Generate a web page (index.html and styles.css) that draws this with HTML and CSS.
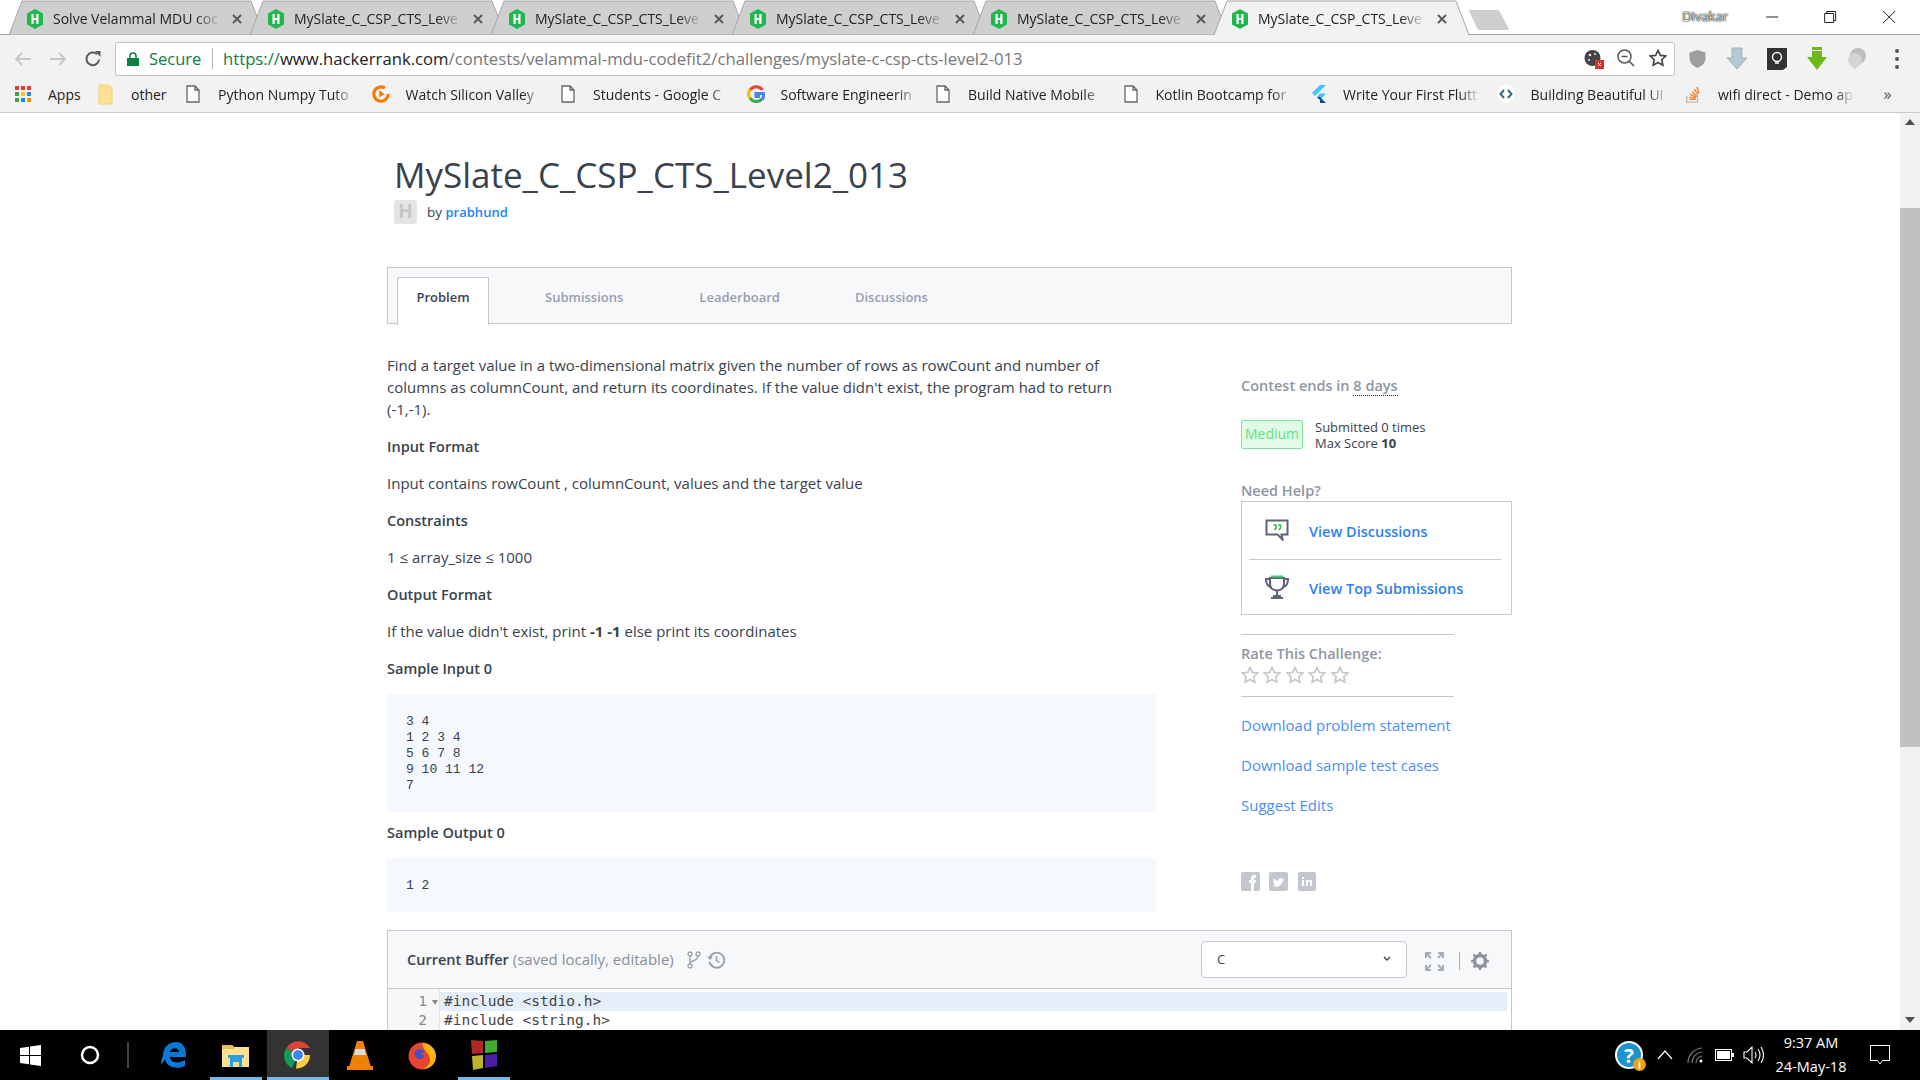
FILE: index.html
```html
<!DOCTYPE html>
<html lang="en">
<head>
<meta charset="utf-8">
<title>MySlate_C_CSP_CTS_Level2_013</title>
<link rel="stylesheet" href="styles.css">
</head>
<body>
<svg class="defs" width="0" height="0">
  <symbol id="hr" viewBox="0 0 18 20"><path d="M9 0l8 4.500v11L9 20l-8-4.500v-11z" fill="#1fb84f"/><path d="M5.500 5h2.200v4h2.600V5h2.200v10h-2.200v-4H7.700v4H5.500z" fill="#fff"/></symbol>
  <symbol id="doc" viewBox="0 0 15 18"><path d="M1.500 1h8l4 4v12h-12z M9.500 1v4h4" fill="#fff" stroke="#666" stroke-width="1.300"/></symbol>
  <symbol id="x" viewBox="0 0 10 10"><path d="M1 1l8 8M9 1l-8 8" stroke="#555" stroke-width="1.800"/></symbol>
  <symbol id="star" viewBox="0 0 20 20"><path d="M10 1.500l2.600 5.600 6 .7-4.400 4.100 1.200 6L10 15l-5.400 2.900 1.200-6L1.400 7.800l6-.7z" fill="#fff" stroke="#c9c7c6" stroke-width="1.800"/></symbol>
</svg>

<header class="browser">
  <div class="tabstrip">
    <div class="tab"><svg class="tab-shape" viewBox="0 0 255 35"><path d="M0 35L13 1h229l13 34z" fill="#cfcfcf" stroke="#a6a6a6"/></svg><svg class="fav"><use href="#hr"/></svg><span class="tab-title">Solve Velammal MDU coc</span><svg class="tab-x"><use href="#x"/></svg></div>
    <div class="tab"><svg class="tab-shape" viewBox="0 0 255 35"><path d="M0 35L13 1h229l13 34z" fill="#cfcfcf" stroke="#a6a6a6"/></svg><svg class="fav"><use href="#hr"/></svg><span class="tab-title">MySlate_C_CSP_CTS_Leve</span><svg class="tab-x"><use href="#x"/></svg></div>
    <div class="tab"><svg class="tab-shape" viewBox="0 0 255 35"><path d="M0 35L13 1h229l13 34z" fill="#cfcfcf" stroke="#a6a6a6"/></svg><svg class="fav"><use href="#hr"/></svg><span class="tab-title">MySlate_C_CSP_CTS_Leve</span><svg class="tab-x"><use href="#x"/></svg></div>
    <div class="tab"><svg class="tab-shape" viewBox="0 0 255 35"><path d="M0 35L13 1h229l13 34z" fill="#cfcfcf" stroke="#a6a6a6"/></svg><svg class="fav"><use href="#hr"/></svg><span class="tab-title">MySlate_C_CSP_CTS_Leve</span><svg class="tab-x"><use href="#x"/></svg></div>
    <div class="tab"><svg class="tab-shape" viewBox="0 0 255 35"><path d="M0 35L13 1h229l13 34z" fill="#cfcfcf" stroke="#a6a6a6"/></svg><svg class="fav"><use href="#hr"/></svg><span class="tab-title">MySlate_C_CSP_CTS_Leve</span><svg class="tab-x"><use href="#x"/></svg></div>
    <div class="tab"><svg class="tab-shape" viewBox="0 0 255 35"><path d="M0 35L13 1h229l13 34z" fill="#f2f2f2" stroke="#a6a6a6"/><path d="M1 35h253" stroke="#f2f2f2" stroke-width="2"/></svg><svg class="fav"><use href="#hr"/></svg><span class="tab-title">MySlate_C_CSP_CTS_Leve</span><svg class="tab-x"><use href="#x"/></svg></div>
    <svg class="newtab" width="42" height="22" viewBox="0 0 42 22"><path d="M1 1h28q2 0 3 2l9 17q0 1-2 1H12q-2 0-3-2L1 2z" fill="#cfcfcf"/></svg>
    <span class="user">Divakar</span>
    <div class="winctl">
      <svg width="12" height="12" viewBox="0 0 12 12"><path d="M0 6h12" stroke="#222"/></svg>
      <svg width="12" height="12" viewBox="0 0 12 12"><path d="M.5 2.500h9v9h-9zM2.500 2.500v-2h9v9h-2" fill="none" stroke="#222"/></svg>
      <svg width="12" height="12" viewBox="0 0 12 12"><path d="M0 0l12 12M12 0L0 12" stroke="#222"/></svg>
    </div>
  </div>

  <div class="toolbar">
    <span class="nav"><svg width="18" height="16" viewBox="0 0 18 16"><path d="M17 8H2M8 2L2 8l6 6" fill="none" stroke="#c6c6c6" stroke-width="1.800"/></svg></span>
    <span class="nav"><svg width="18" height="16" viewBox="0 0 18 16"><path d="M1 8h15M10 2l6 6-6 6" fill="none" stroke="#c6c6c6" stroke-width="1.800"/></svg></span>
    <span class="nav"><svg width="18" height="18" viewBox="0 0 18 18"><path d="M15 9.500A6.300 6.300 0 1 1 13 4.200" fill="none" stroke="#5a5a5a" stroke-width="2"/><path d="M11 1l5.500 0v6z" fill="#5a5a5a"/></svg></span>
    <div class="omnibox">
      <svg class="lock" width="12" height="14" viewBox="0 0 12 14"><path d="M0 6h12v8H0z" fill="#0b8043"/><path d="M3 6V4a3 3 0 0 1 6 0v2" fill="none" stroke="#0b8043" stroke-width="1.500"/></svg>
      <span class="secure">Secure</span>
      <span class="omni-sep"></span>
      <span class="url"><span class="url-scheme">https://</span><span class="url-host">www.hackerrank.com</span>/contests/velammal-mdu-codefit2/challenges/myslate-c-csp-cts-level2-013</span>
      <div class="omni-icons">
        <span class="omni-icon"><svg width="20" height="20" viewBox="0 0 20 20"><circle cx="8.500" cy="9" r="8" fill="#444"/><circle cx="6" cy="6" r="1.300" fill="#f2f2f2"/><circle cx="11" cy="5" r="1" fill="#f2f2f2"/><circle cx="5" cy="11" r="1" fill="#f2f2f2"/><rect x="11" y="11" width="9" height="9" fill="#d9342b"/><path d="M14 14l3 3M17 14l-3 3" stroke="#fff"/></svg></span>
        <span class="omni-icon"><svg width="18" height="18" viewBox="0 0 18 18"><circle cx="7.500" cy="7.500" r="6.500" fill="none" stroke="#555" stroke-width="1.500"/><path d="M4.500 7.500h6M12 12l5 5" stroke="#555" stroke-width="1.600"/></svg></span>
        <span class="omni-icon"><svg width="18" height="18" viewBox="0 0 20 20"><path d="M10 1.500l2.600 5.600 6 .7-4.400 4.100 1.200 6L10 15l-5.400 2.900 1.200-6L1.400 7.800l6-.7z" fill="none" stroke="#444" stroke-width="1.800"/></svg></span>
      </div>
    </div>
    <span class="ext ext-shield"><svg width="17" height="19" viewBox="0 0 17 19"><path d="M8.500 1l8 2.500v6q0 6-8 9.500-8-3.500-8-9.500v-6z" fill="#9e9e9e"/></svg></span>
    <span class="ext"><svg width="22" height="24" viewBox="0 0 22 24"><path d="M6 1h10v10h5L11 22 1 11h5z" fill="#b4c7d4" stroke="#9aa" stroke-width=".8"/></svg></span>
    <span class="ext"><svg width="20" height="24" viewBox="0 0 20 24"><path d="M0 1h20v19l-4 3H0z" fill="#333"/><circle cx="10" cy="10" r="4.500" fill="none" stroke="#fff" stroke-width="1.400"/><path d="M8 16h4" stroke="#fff" stroke-width="1.500"/></svg></span>
    <span class="ext"><svg width="22" height="24" viewBox="0 0 22 24"><path d="M6 0h10v3H6zM6 4h10v6h5L11 23 1 10h5z" fill="#6fb81c"/></svg></span>
    <span class="ext"><svg width="22" height="24" viewBox="0 0 22 24"><circle cx="12" cy="9" r="8" fill="#bdbdbd"/><circle cx="9" cy="13" r="7" fill="#d4d4d4"/><path d="M6 18l2 5 4-4z" fill="#d4d4d4"/></svg></span>
    <span class="ext ext-dots"><i></i><i></i><i></i></span>
  </div>

  <div class="bookmarks">
    <span class="bm-apps"><svg width="16" height="16" viewBox="0 0 16 16"><g fill="#e53935"><rect width="4" height="4"/><rect x="6" width="4" height="4"/></g><rect x="12" width="4" height="4" fill="#e53935"/><rect y="6" width="4" height="4" fill="#43a047"/><rect x="6" y="6" width="4" height="4" fill="#fbc02d"/><rect x="12" y="6" width="4" height="4" fill="#1e88e5"/><rect y="12" width="4" height="4" fill="#43a047"/><rect x="6" y="12" width="4" height="4" fill="#1e88e5"/><rect x="12" y="12" width="4" height="4" fill="#fb8c00"/></svg>Apps</span>
    <span class="bm-folder"><svg width="15" height="21" viewBox="0 0 15 21"><path d="M1 1h9l4 3v16H1z" fill="#fde293" stroke="#f0d27a"/></svg>other</span>
    <span class="bm"><svg class="bm-ico"><use href="#doc"/></svg><span class="bm-text">Python Numpy Tuto</span></span>
    <span class="bm"><svg class="bm-ico" viewBox="0 0 20 20"><circle cx="10" cy="10" r="8" fill="none" stroke="#f57c00" stroke-width="3.500" stroke-dasharray="42 8"/><path d="M8 6l6 4-6 4z" fill="#f57c00"/></svg><span class="bm-text">Watch Silicon Valley</span></span>
    <span class="bm"><svg class="bm-ico"><use href="#doc"/></svg><span class="bm-text">Students - Google C</span></span>
    <span class="bm"><svg class="bm-ico" viewBox="0 0 18 18"><path d="M15.500 5A7.500 7.500 0 0 0 3 5" fill="none" stroke="#ea4335" stroke-width="3"/><path d="M3.200 4.500a7.500 7.500 0 0 0 0 9" fill="none" stroke="#fbbc05" stroke-width="3"/><path d="M3 13a7.500 7.500 0 0 0 12 1" fill="none" stroke="#34a853" stroke-width="3"/><path d="M15 14.500a7.500 7.500 0 0 0 1.500-6H9v3h4" fill="none" stroke="#4285f4" stroke-width="3"/></svg><span class="bm-text">Software Engineerin</span></span>
    <span class="bm"><svg class="bm-ico"><use href="#doc"/></svg><span class="bm-text">Build Native Mobile</span></span>
    <span class="bm"><svg class="bm-ico"><use href="#doc"/></svg><span class="bm-text">Kotlin Bootcamp for</span></span>
    <span class="bm"><svg class="bm-ico" viewBox="0 0 18 18"><path d="M11 0h6L6 11 3 8z" fill="#40c4ff"/><path d="M11 8.500h6L11 15l-3-3z" fill="#40c4ff"/><path d="M8 12l3 3 0 3h6l-6-6z" fill="#0d47a1"/></svg><span class="bm-text">Write Your First Flutt</span></span>
    <span class="bm"><svg class="bm-ico" viewBox="0 0 18 18"><circle cx="9" cy="9" r="9" fill="#fff"/><path d="M7 5L3.500 9 7 13M11 5l3.500 4L11 13" fill="none" stroke="#37697f" stroke-width="2"/></svg><span class="bm-text">Building Beautiful UI</span></span>
    <span class="bm"><svg class="bm-ico" viewBox="0 0 18 20"><path d="M2 12v7h12v-7" fill="none" stroke="#bcbbbb" stroke-width="1.500"/><path d="M5 16h7M5 13.500l7 1M6 10.500l6.500 3M8 7.500l5.500 5M10.500 4.500l4 6M13.500 2l2 7" stroke="#f48024" stroke-width="1.500"/></svg><span class="bm-text">wifi direct - Demo ap</span></span>
    <span class="bm-more">»</span>
  </div>
</header>

<div class="viewport">
  <main class="page">
    <div class="head">
      <h1 class="title">MySlate_C_CSP_CTS_Level2_013</h1>
      <div class="byline"><span class="avatar">H</span>by&nbsp;<a class="link-strong">prabhund</a></div>
    </div>

    <nav class="tabs">
      <span class="ptab ptab-active">Problem</span>
      <span class="ptab ptab-sub">Submissions</span>
      <span class="ptab ptab-lead">Leaderboard</span>
      <span class="ptab ptab-disc">Discussions</span>
    </nav>

    <div class="columns">
      <section class="statement">
        <p class="intro">Find a target value in a two-dimensional matrix given the number of rows as rowCount and number of columns as columnCount, and return its coordinates. If the value didn't exist, the program had to return (-1,-1).</p>
        <p class="label">Input Format</p>
        <p>Input contains rowCount , columnCount, values and the target value</p>
        <p class="label">Constraints</p>
        <p>1 ≤ array_size ≤ 1000</p>
        <p class="label">Output Format</p>
        <p>If the value didn't exist, print <b>-1 -1</b> else print its coordinates</p>
        <p class="label">Sample Input 0</p>
        <pre class="sample">3 4
1 2 3 4
5 6 7 8
9 10 11 12
7</pre>
        <p class="label label-tight">Sample Output 0</p>
        <pre class="sample">1 2</pre>
      </section>

      <aside class="side">
        <p class="side-head">Contest ends in <span class="dotted">8 days</span></p>
        <div class="meta">
          <span class="badge">Medium</span>
          <div class="meta-text">Submitted 0 times<br>Max Score <b>10</b></div>
        </div>
        <p class="side-head need">Need Help?</p>
        <div class="help">
          <a class="help-row"><svg width="24" height="22" viewBox="0 0 24 22"><path d="M1.500 1.500h21v14h-6l1 5-5-5h-11z" fill="none" stroke="#5b6478" stroke-width="2"/><path d="M8.500 6h2.500v3l-1.500 2M13 6h2.500v3L14 11" fill="none" stroke="#39b54a" stroke-width="1.500"/></svg><span class="help-text">View Discussions</span></a>
          <a class="help-row"><svg width="24" height="24" viewBox="0 0 24 24"><path d="M5 3h14v6q0 6-7 6.500Q5 15 5 9z" fill="none" stroke="#5b6478" stroke-width="2"/><path d="M5 4H1q0 7 5 8M19 4h4q0 7-5 8M12 16v4M6 23h12M8 21h8" fill="none" stroke="#5b6478" stroke-width="2"/><path d="M6 1.500h12" stroke="#39d06b" stroke-width="2"/></svg><span class="help-text">View Top Submissions</span></a>
        </div>
        <div class="rate">
          <p class="side-head rate-head">Rate This Challenge:</p>
          <div class="stars"><svg><use href="#star"/></svg><svg><use href="#star"/></svg><svg><use href="#star"/></svg><svg><use href="#star"/></svg><svg><use href="#star"/></svg></div>
        </div>
        <a class="side-link">Download problem statement</a>
        <a class="side-link">Download sample test cases</a>
        <a class="side-link">Suggest Edits</a>
        <div class="social">
          <svg width="19" height="19" viewBox="0 0 19 19"><rect width="19" height="19" rx="2" fill="#c2c6ce"/><path d="M10 19v-8H8V8h2V6q0-3 3-3h2v3h-1.500Q13 6 13 7v1h2l-.5 3H13v8z" fill="#fff"/></svg>
          <svg width="19" height="19" viewBox="0 0 19 19"><rect width="19" height="19" rx="2" fill="#c2c6ce"/><path d="M3 14q8 3 11-5l1.500-2-1.500.3q-2-2.300-4-.5-1 1-.5 2-3 0-5-2.500-1 2 .8 4L4 9.500q.2 1.800 2 2.500l-1 .2q.7 1.200 2 1.300z" fill="#fff"/></svg>
          <svg class="social-in" width="18" height="19" viewBox="0 0 18 19"><rect width="18" height="19" rx="2" fill="#c2c6ce"/><path d="M4 8h2v6H4zM4 5h2v2H4zM8 8h2v1q2-2 3.500-.5.500.700.500 2V14h-2v-3.500q-.5-1.500-2 0V14H8z" fill="#fff"/></svg>
        </div>
      </aside>
    </div>

    <section class="buffer">
      <div class="buffer-head">
        <span class="buffer-title"><b>Current Buffer</b> (saved locally, editable)</span>
        <svg class="buffer-ico" width="14" height="18" viewBox="0 0 14 18"><circle cx="3" cy="3" r="2" fill="none" stroke="#9aa0ab" stroke-width="1.300"/><circle cx="3" cy="15" r="2" fill="none" stroke="#9aa0ab" stroke-width="1.300"/><circle cx="11" cy="3" r="2" fill="none" stroke="#9aa0ab" stroke-width="1.300"/><path d="M3 5v8M11 5q0 4-8 6" fill="none" stroke="#9aa0ab" stroke-width="1.300"/></svg>
        <svg class="buffer-ico buffer-ico-2" width="18" height="18" viewBox="0 0 18 18"><path d="M3 6a7.500 7.500 0 1 1-.5 5" fill="none" stroke="#9aa0ab" stroke-width="1.800"/><path d="M0 6l3.500 3L6 5z" fill="#9aa0ab"/><path d="M9.500 5v4.500l3 2" fill="none" stroke="#9aa0ab" stroke-width="1.500"/></svg>
        <div class="select"><span>C</span><svg width="8" height="6" viewBox="0 0 8 6"><path d="M1 1l3 3 3-3" fill="none" stroke="#444" stroke-width="1.400"/></svg></div>
        <svg class="expand" width="19" height="19" viewBox="0 0 19 19"><path d="M1 6V1h5M13 1h5v5M18 13v5h-5M6 18H1v-5M1 1l5 5M18 1l-5 5M18 18l-5-5M1 18l5-5" fill="none" stroke="#a4adba" stroke-width="2"/></svg>
        <span class="head-sep"></span>
        <svg class="gear" width="18" height="18" viewBox="0 0 18 18"><circle cx="9" cy="9" r="5.500" fill="none" stroke="#8c94a1" stroke-width="3.500"/><path d="M9 0v4M9 14v4M0 9h4M14 9h4M2.600 2.600l2.800 2.800M12.600 12.600l2.800 2.800M15.400 2.600l-2.800 2.800M5.400 12.600l-2.800 2.800" stroke="#8c94a1" stroke-width="2.600"/></svg>
      </div>
      <div class="code">
        <div class="gutter"><span class="ln">1<i class="fold"></i></span><span class="ln">2</span></div>
        <div class="lines"><div class="line line-active">#include &lt;stdio.h&gt;</div><div class="line">#include &lt;string.h&gt;</div></div>
      </div>
    </section>
  </main>
  <div class="scrollbar">
    <span class="arrow arrow-up"></span>
    <span class="thumb"></span>
    <span class="arrow arrow-down"></span>
  </div>
</div>

<footer class="taskbar">
  <span class="tb tb-start"><svg width="21" height="21" viewBox="0 0 21 21"><path d="M0 3l9-1.300V10H0zM10 1.500L21 0v10H10zM0 11h9v8.300L0 18zM10 11h11v10l-11-1.500z" fill="#fff"/></svg></span>
  <span class="tb tb-cortana"><svg width="20" height="20" viewBox="0 0 20 20"><circle cx="10" cy="10" r="8" fill="none" stroke="#fff" stroke-width="2.500"/></svg></span>
  <span class="tb-divider"></span>
  <span class="tb"><svg width="26" height="28" viewBox="0 0 26 28"><path d="M2 15C2 6 8 1 15 1c7 0 10 6 10 13v2H9c.5 6 9 7 15 3v6c-8 4-19 1-20-7 0 0-1 3-4 5 0-4 1-6 2-8zM9 11h9c0-5-8-5-9 0z" fill="#0a78d7"/></svg></span>
  <span class="tb tb-open"><svg width="28" height="25" viewBox="0 0 28 25"><path d="M0 2h10l2 2h15v20H0z" fill="#fbe08d"/><path d="M0 2h10l2 2v2H0z" fill="#e9bd55"/><path d="M8 15h12v9h-3v-5h-6v5H8z" fill="#2b9fe6"/><path d="M6 12h16v3H6z" fill="#2b9fe6"/></svg></span>
  <span class="tb tb-active tb-open"><svg width="28" height="28" viewBox="0 0 28 28"><path d="M14 14L2.500 7A13.500 13.500 0 0 1 26 7H14z" fill="#db4437"/><path d="M14 14L8 27A13.500 13.500 0 0 1 2.500 7z" fill="#0f9d58"/><path d="M14 14h12a13.500 13.500 0 0 1-14 13.500z" fill="#ffcd40"/><circle cx="14" cy="14" r="6.500" fill="#fff"/><circle cx="14" cy="14" r="5" fill="#4285f4"/></svg></span>
  <span class="tb"><svg width="26" height="29" viewBox="0 0 26 29"><path d="M10 0h6l8 26H2z" fill="#f08000"/><path d="M8.500 8h9l1.500 6H7z" fill="#ddd"/><path d="M0 25h26v4H0z" fill="#f08000"/></svg></span>
  <span class="tb"><svg width="29" height="29" viewBox="0 0 29 29"><circle cx="14" cy="15" r="13.500" fill="#e8442e"/><path d="M14 2c8 0 14 6 14 13 0 8-6 13-13 13 7-3 9-9 5-15-2-3-5-5-6-11z" fill="#ffb412"/><path d="M7 10c3-3 9-2 10 1-2 0-4 1-4 2l3 2c0 3-5 4-7 2-2-1-3-4-2-7z" fill="#3d4fd0"/></svg></span>
  <span class="tb tb-open"><svg width="28" height="32" viewBox="0 0 28 32"><path d="M1 1l12 1v12L2 15z" fill="#b02a22"/><path d="M15 2l12-1v12l-12 1z" fill="#3fae2a"/><path d="M2 17l11-1v13L3 31z" fill="#bcb42c"/><path d="M15 16l12-1v12l-12 2z" fill="#4a1fa8"/></svg></span>
  <div class="tray">
    <span class="tray-help">?<i class="tray-info">i</i></span>
    <svg width="16" height="10" viewBox="0 0 16 10"><path d="M1 9l7-8 7 8" fill="none" stroke="#fff" stroke-width="1.200"/></svg>
    <svg width="18" height="18" viewBox="0 0 18 18"><path d="M1 17A15 15 0 0 1 15 2M5 17A11 11 0 0 1 15 6M9 17a7 7 0 0 1 6-7" fill="none" stroke="#777" stroke-width="1.200"/><circle cx="14" cy="15" r="1.500" fill="#fff"/></svg>
    <svg class="tray-battery" width="19" height="12" viewBox="0 0 19 12"><rect x=".5" y=".5" width="16" height="11" fill="none" stroke="#fff"/><rect x="2" y="2" width="13" height="8" fill="#fff"/><rect x="17" y="4" width="2" height="4" fill="#fff"/></svg>
    <svg class="tray-speaker" width="21" height="20" viewBox="0 0 21 20"><path d="M1 7h3l5-5v16l-5-5H1zM12 7q2 3 0 6M15 4q4 6 0 12M18 2q5 8 0 16" fill="none" stroke="#fff" stroke-width="1.100"/></svg>
    <span class="clock">9:37 AM<br>24-May-18</span>
    <svg class="notif" width="20" height="20" viewBox="0 0 20 20"><path d="M.5.500h19v15h-7L10 19l-2.500-3.500h-7z" fill="none" stroke="#fff"/></svg>
  </div>
</footer>
</body>
</html>
```

FILE: styles.css
```css
* { box-sizing: border-box; }
html, body { margin: 0; height: 1080px; overflow: hidden; }
body { display: flex; flex-direction: column; background: #fff; font-family: "Open Sans", sans-serif; color: #39424e; }
.defs { position: absolute; }
p, h1, pre { margin: 0; }
a { text-decoration: none; }

/* browser chrome */
.browser { flex: none; background: #f2f2f2; color: #222; font-size: 14px; border-bottom: 1px solid #c9c9c9; }
.tabstrip { height: 35px; display: flex; padding-left: 9px; background: linear-gradient(to top, #a6a6a6 1px, #fff 1px); }
.tab { position: relative; flex: none; width: 255px; height: 35px; margin-right: -14px; display: flex; align-items: center; padding-left: 17px; padding-top: 2px; }
.tab-shape { position: absolute; left: 0; top: 0; width: 255px; height: 35px; }
.fav { position: relative; width: 18px; height: 20px; flex: none; }
.tab-title { position: relative; width: 168px; margin-left: 9px; white-space: nowrap; -webkit-mask-image: linear-gradient(to right, #000 85%, transparent); mask-image: linear-gradient(to right, #000 85%, transparent); }
.tab-x { position: relative; width: 10px; height: 10px; margin-left: 11px; flex: none; }
.newtab { flex: none; margin: 9px 0 0 13px; }
.user { margin-left: auto; margin-right: 15px; padding-top: 7px; font-size: 13px; color: #ddd; text-shadow: 0 0 2px #000, 0 0 1px #000; }
.winctl { width: 177px; display: flex; margin-bottom: 6px; padding-right: 2px; }
.winctl svg { flex: 1; margin-top: 11px; }

.toolbar { height: 43px; display: flex; align-items: center; padding: 4px 0 0 5px; }
.nav { flex: none; width: 35px; display: flex; justify-content: center; }
.omnibox { flex: none; width: 1560px; height: 34px; margin-left: 5px; display: flex; align-items: center; padding-left: 11px; background: #fff; border: 1px solid #c4c4c4; border-radius: 2px; }
.lock { flex: none; }
.secure { margin-left: 10px; color: #0b8043; width: 51px; white-space: nowrap; font-size: 16.500px; }
.omni-sep { width: 1px; height: 21px; margin: 0 10px 0 12px; background: #b5b5b5; }
.url { color: #777; white-space: nowrap; font-size: 16.700px; }
.url-scheme { color: #0b8043; }
.url-host { color: #222; }
.omni-icons { margin-left: auto; display: flex; }
.omni-icon { width: 32px; display: flex; justify-content: center; }
.ext { flex: none; width: 40px; display: flex; justify-content: center; }
.ext-shield { margin-left: 2px; }
.ext-dots { flex-direction: column; align-items: center; gap: 4px; }
.ext-dots i { width: 4px; height: 4px; border-radius: 50%; background: #555; }

.bookmarks { height: 34px; display: flex; align-items: center; padding: 0 0 2px 15px; font-size: 14px; }
.bm-apps, .bm-folder, .bm { display: flex; align-items: center; flex: none; }
.bm-apps { width: 83px; gap: 17px; }
.bm-folder { width: 81px; gap: 18px; }
.bm { width: 187.500px; padding-left: 5px; }
.bm-ico { width: 18px; height: 18px; flex: none; }
.bm-text { margin-left: 16px; width: 137px; white-space: nowrap; -webkit-mask-image: linear-gradient(to right, #000 85%, transparent); mask-image: linear-gradient(to right, #000 85%, transparent); }
.bm-more { margin-left: 17px; color: #555; font-size: 16px; }

/* viewport */
.viewport { flex: 1; min-height: 0; display: flex; }
.page { flex: 1; min-width: 0; overflow: hidden; padding: 42px 388px 0 387px; font-size: 15px; line-height: 22px; }
.head { padding-left: 7px; }
.title { font-size: 35px; font-weight: 400; line-height: 40px; margin-bottom: 5px; }
.byline { display: flex; align-items: center; height: 24px; font-size: 13.500px; }
.avatar { width: 23px; height: 24px; margin-right: 10px; background: #e4e4e4; border-radius: 3px; color: #c6c6c6; font-weight: 700; font-size: 19px; text-align: center; }
.link-strong { color: #1a85f5; font-weight: 600; font-size: 13px; }

.tabs { position: relative; margin-top: 43px; height: 57px; display: flex; background: #f7f8fa; border: 1px solid #c2c7d0; font-size: 13px; font-weight: 600; color: #979faf; }
.ptab { display: flex; align-items: center; height: 47px; margin-top: 9px; padding-bottom: 8px; }
.ptab-active { width: 92px; margin-left: 9px; height: 48px; padding-bottom: 9px; justify-content: center; background: #fff; border: 1px solid #c2c7d0; border-bottom: 0; color: #39424e; }
.ptab-sub { margin-left: 56px; }
.ptab-lead { margin-left: 76px; }
.ptab-disc { margin-left: 75px; }

.columns { display: flex; margin-top: 30px; }
.statement { flex: none; width: 769px; }
.statement p { margin-bottom: 15px; }
.statement p.intro { width: 740px; margin-bottom: 15px; }
.statement .label { font-weight: 600; font-size: 14.500px; line-height: 24px; margin-bottom: 13px; }
.statement .label-tight { margin: 9px 0 13px; }
.sample { padding: 20px 19px 18px; background: #f5f9ff; font: 13px/16px "Liberation Mono", monospace; }

.side { margin-left: 85px; width: 271px; padding-top: 21px; }
.side-head { font-weight: 600; font-size: 14.500px; color: #8f96a3; }
.dotted { border-bottom: 1px dotted #222; }
.meta { display: flex; align-items: center; height: 32px; margin-top: 21px; }
.badge { width: 62px; height: 29px; display: flex; align-items: center; justify-content: center; background: #e1fbe7; border: 1px solid #79e69a; border-radius: 2px; color: #63e083; font-size: 14px; }
.meta-text { margin-left: 12px; padding-top: 2px; font-size: 13px; line-height: 16px; }
.need { margin: 30px 0 -1px; }
.help { height: 114px; padding: 0 10px 0 7px; border: 1px solid #c9c9c9; }
.help-row { display: flex; align-items: center; height: 56.500px; gap: 20px; padding-left: 16px; color: #2c80f0; font-weight: 600; font-size: 14.500px; }
.help-row + .help-row { border-top: 1px solid #c9c9c9; }
.help-row svg { flex: none; }
.help-text { padding-top: 3px; }
.rate { width: 213px; margin: 19px 0 -1px; padding: 9px 0 12px; border-top: 1px solid #c2c7d0; border-bottom: 1px solid #c2c7d0; }
.rate-head { line-height: 20px; }
.stars { display: flex; gap: 4.400px; margin-top: 2px; }
.stars svg { width: 18px; height: 18px; }
.side-link { display: block; margin-top: 18px; color: #4d8df7; font-size: 15px; }
.social { display: flex; gap: 9px; margin-top: 56px; }
.social-in { margin-left: 1px; }

.buffer { margin-top: 18px; height: 300px; border: 1px solid #c2c7d0; }
.buffer-head { height: 58px; display: flex; align-items: center; padding: 0 22px 0 19px; background: #f7f8fa; border-bottom: 1px solid #c2c7d0; font-size: 15px; color: #8a8f98; }
.buffer-title b { font-weight: 600; font-size: 14.500px; color: #39424e; }
.buffer-ico { margin-left: 13px; }
.buffer-ico-2 { margin-left: 6px; }
.select { width: 206px; height: 37px; margin-left: auto; display: flex; align-items: center; justify-content: space-between; padding: 0 15px 2px; background: #fff; border: 1px solid #c2c7d0; border-radius: 4px; font-size: 13px; color: #39424e; }
.expand { margin: 3px 0 0 18px; }
.head-sep { width: 1px; height: 18px; margin: 2px 11px 0 15px; background: #a4adba; }
.gear { margin-top: 2px; }
.code { display: flex; font: 14.500px/19px "DejaVu Sans Mono", monospace; color: #444; }
.gutter { flex: none; width: 52px; padding-top: 3px; background: #f7f7f7; border-right: 1px solid #e4e4e4; color: #888; text-align: right; }
.ln { display: block; position: relative; padding-right: 12px; }
.fold { position: absolute; right: 1px; top: 8px; border: 3.500px solid transparent; border-top: 5px solid #888; }
.lines { flex: 1; padding: 3px 4px 0 0; }
.line { padding-left: 4px; height: 19px; }
.line-active { background: #e4effb; }

.scrollbar { flex: none; width: 20px; display: flex; flex-direction: column; background: #f1f1f1; }
.arrow { flex: none; height: 20px; position: relative; }
.arrow::after { content: ""; position: absolute; left: 5px; border: 5px solid transparent; }
.arrow-up::after { top: 1px; border-bottom: 6px solid #505050; }
.arrow-down { margin-top: auto; }
.arrow-down::after { top: 7px; border-top: 6px solid #505050; }
.thumb { flex: none; height: 539px; margin-top: 75px; background: #c1c1c1; }

/* taskbar */
.taskbar { flex: none; height: 50px; display: flex; align-items: center; background: #000; color: #fff; }
.tb { flex: none; width: 62px; height: 50px; display: flex; align-items: center; justify-content: center; position: relative; }
.tb-start { width: 60px; }
.tb-cortana { width: 60px; }
.tb-divider { flex: none; width: 2px; height: 26px; margin: 0 14px 0 7px; background: #444; }
.tb-active { background: #333; }
.tb-open::after { content: ""; position: absolute; left: 5px; right: 5px; bottom: 0; height: 3px; background: #76b9ed; }
.tb-active::after { left: 0; right: 0; }
.tray { margin-left: auto; display: flex; align-items: center; }
.tray > svg { margin-left: 14px; }
.tray-help { position: relative; width: 28px; height: 28px; display: flex; align-items: center; justify-content: center; background: #1c93d1; border: 2px solid #fff; border-radius: 50%; font-weight: 700; font-size: 20px; }
.tray-info { position: absolute; right: -5px; bottom: -4px; width: 13px; height: 13px; display: flex; align-items: center; justify-content: center; background: #f0a30a; border-radius: 50%; font-size: 10px; font-style: normal; }
.tray > .tray-battery { margin-left: 10px; }
.tray > .tray-speaker { margin-left: 9px; }
.clock { margin-left: 5px; width: 84px; text-align: center; font-size: 14.500px; line-height: 24px; }
.tray > .notif { margin: 0 30px 0 17px; }
```
